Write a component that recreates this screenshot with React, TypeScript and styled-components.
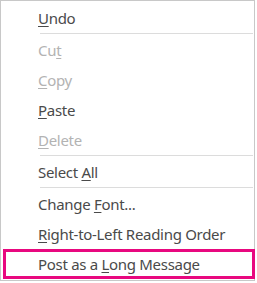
import React from "react";
import styled, { createGlobalStyle } from "styled-components";

const Global = createGlobalStyle`
  html, body { margin: 0; padding: 0; background: #ffffff; }
  body { font-family: "Noto Sans", "Open Sans", sans-serif; }
`;

const Menu = styled.div`
  box-sizing: border-box;
  width: 255px;
  border: 1px solid #c8c8c8;
  background: #ffffff;
  padding: 2px 0 1px;
  display: flex;
  flex-direction: column;
`;

const Item = styled.div<{ $disabled?: boolean; $highlight?: boolean }>`
  box-sizing: border-box;
  height: 30px;
  display: flex;
  align-items: center;
  padding-left: 37px;
  font-size: 15px;
  letter-spacing: -0.3px;
  color: ${(p) => (p.$disabled ? "#b3b3b3" : "#4a4a4a")};
  white-space: nowrap;
  ${(p) =>
    p.$highlight &&
    `
    border: 3px solid #e8087f;
    margin-left: 2px;
    margin-right: -1px;
    padding-left: 32px;
  `}
`;

const Label = styled.span`
  white-space: pre;
`;

const Key = styled.span`
  text-decoration: underline;
  text-decoration-thickness: 1px;
  text-underline-offset: 2px;
`;

const Separator = styled.div`
  height: 1px;
  margin: 0 1px 1px 39px;
  background: #dcdcdc;
`;

type Entry =
  | { sep: true }
  | { pre: string; key: string; post: string; disabled?: boolean; highlight?: boolean };

const entries: Entry[] = [
  { pre: "", key: "U", post: "ndo" },
  { sep: true },
  { pre: "Cu", key: "t", post: "", disabled: true },
  { pre: "", key: "C", post: "opy", disabled: true },
  { pre: "", key: "P", post: "aste" },
  { pre: "", key: "D", post: "elete", disabled: true },
  { sep: true },
  { pre: "Select ", key: "A", post: "ll" },
  { sep: true },
  { pre: "Change ", key: "F", post: "ont..." },
  { pre: "", key: "R", post: "ight-to-Left Reading Order" },
  { pre: "Post as a ", key: "L", post: "ong Message", highlight: true },
];

export default function App() {
  return (
    <>
      <Global />
      <Menu>
        {entries.map((e, i) =>
          "sep" in e ? (
            <Separator key={i} />
          ) : (
            <Item key={i} $disabled={e.disabled} $highlight={e.highlight}>
              <Label>
                {e.pre}
                <Key>{e.key}</Key>
                {e.post}
              </Label>
            </Item>
          )
        )}
      </Menu>
    </>
  );
}
